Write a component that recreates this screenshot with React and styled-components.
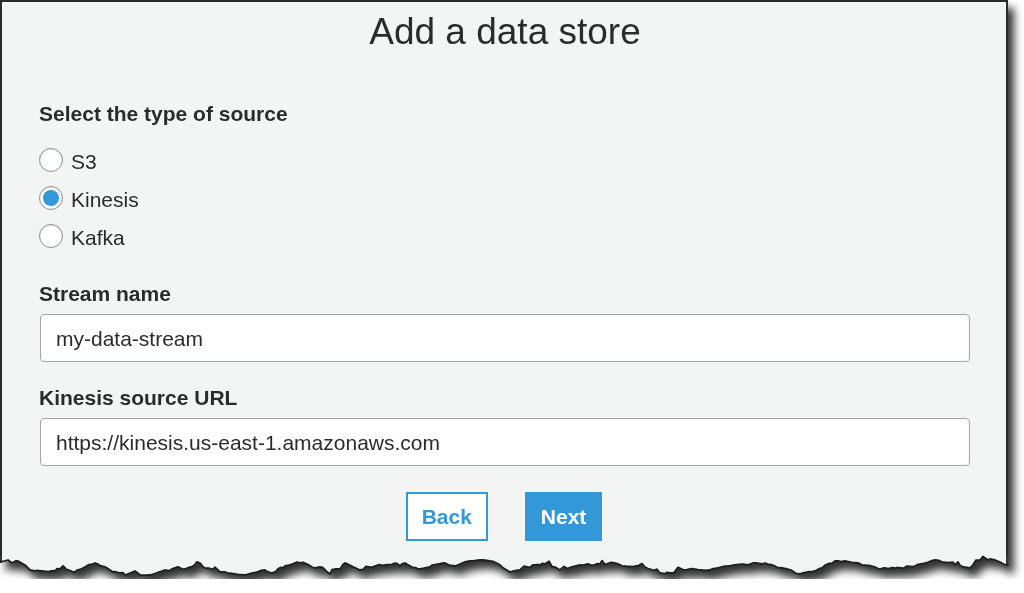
import React from "react";
import styled, { createGlobalStyle } from "styled-components";

const GlobalStyle = createGlobalStyle`
  html, body {
    margin: 0;
    background: #ffffff;
    overflow: hidden;
  }
  body {
    font-family: "Liberation Sans", Arial, Helvetica, sans-serif;
    color: #2d2d2d;
  }
`;

// seeded random so the torn edge is the same every render
const seeded = (seed) => () => {
  seed |= 0;
  seed = (seed + 0x6d2b79f5) | 0;
  let t = Math.imul(seed ^ (seed >>> 15), 1 | seed);
  t = (t + Math.imul(t ^ (t >>> 7), 61 | t)) ^ t;
  return ((t ^ (t >>> 14)) >>> 0) / 4294967296;
};

// rough outline of the tear, [x, y] with y measured from the panel bottom
const TEAR = [
  [0, 7], [8, 5], [12, 8], [18, 6], [25, 10], [30, 15], [35, 16], [55, 16],
  [60, 14], [63, 11], [66, 14], [75, 17], [85, 12], [95, 8], [107, 13],
  [113, 17], [125, 20], [135, 16], [140, 20], [150, 20], [165, 15], [185, 14],
  [200, 8], [205, 13], [220, 17], [245, 20], [258, 17], [265, 15], [272, 18],
  [285, 11], [297, 7], [312, 12], [320, 12], [330, 19], [340, 14], [345, 8],
  [360, 15], [375, 11], [395, 8], [400, 11], [405, 8], [418, 14], [445, 8],
  [455, 11], [470, 6], [480, 5], [490, 6], [500, 10], [510, 17], [520, 15],
  [535, 10], [545, 9], [560, 15], [580, 10], [600, 9], [615, 8], [625, 11],
  [645, 12], [660, 18], [670, 18], [690, 14], [710, 15], [728, 11], [765, 8],
  [782, 13], [800, 19], [815, 16], [835, 6], [845, 6], [875, 12], [880, 14],
  [900, 13], [915, 11], [935, 5], [955, 10], [970, 13], [980, 5], [990, 4],
  [1000, 7], [1008, 10],
];

const makeEdge = () => {
  const r = seeded(11);
  const pts = [];
  for (let i = 0; i < TEAR.length - 1; i++) {
    const [x0, y0] = TEAR[i];
    const [x1, y1] = TEAR[i + 1];
    pts.push([x0, y0]);
    let x = x0 + 2 + Math.round(r() * 3);
    while (x < x1 - 1) {
      const t = (x - x0) / (x1 - x0);
      let y = y0 + (y1 - y0) * t + (r() - 0.5) * 2;
      if (r() > 0.85) y -= 1.5 + r() * 2;
      pts.push([x, +y.toFixed(1)]);
      x += 2 + Math.round(r() * 4);
    }
  }
  pts.push(TEAR[TEAR.length - 1]);
  return pts;
};
const EDGE = makeEdge();
const EDGE_W = 1008;
const edgeLine = EDGE.map(([x, y]) => `${x},${y}`).join(" L");

const SOURCES = ["S3", "Kinesis", "Kafka"];

const App = () => {
  const selected = "Kinesis";

  return (
    <>
      <GlobalStyle />
      <Sheet>
        <Panel>
          <Title>Add a data store</Title>

          <SectionLabel top={48}>Select the type of source</SectionLabel>
          <RadioList>
            {SOURCES.map((s) => (
              <RadioRow key={s}>
                <RadioDot checked={s === selected} />
                <RadioText>{s}</RadioText>
              </RadioRow>
            ))}
          </RadioList>

          <SectionLabel top={27}>Stream name</SectionLabel>
          <TextBox>my-data-stream</TextBox>

          <SectionLabel top={24}>Kinesis source URL</SectionLabel>
          <TextBox>https://kinesis.us-east-1.amazonaws.com</TextBox>

          <Actions>
            <Button>Back</Button>
            <Button primary>Next</Button>
          </Actions>
        </Panel>

        {/* torn paper bottom */}
        <TornEdge viewBox={`0 0 ${EDGE_W} 24`} width={EDGE_W} height="24">
          <path d={`M0,0 L${edgeLine} L${EDGE_W},0 Z`} fill="#f3f5f5" />
          <path
            d={`M1,0 L1,${EDGE[0][1]} L${edgeLine} L1007,${TEAR[TEAR.length - 1][1]} L1007,0`}
            fill="none"
            stroke="#1f1f1f"
            strokeWidth="1.8"
            strokeLinejoin="round"
          />
        </TornEdge>
      </Sheet>
    </>
  );
};

// styled components

const Sheet = styled.div`
  width: 1008px;
  display: flex;
  flex-direction: column;
  filter: drop-shadow(6px 8px 4px rgba(0, 0, 0, 0.8));
`;

const Panel = styled.div`
  box-sizing: border-box;
  width: 1008px;
  background: #f3f5f5;
  border: 2px solid #2a2a2a;
  border-bottom: none;
  padding: 8px 36px 14px 38px;
  display: flex;
  flex-direction: column;
`;

const Title = styled.h1`
  margin: 0;
  text-align: center;
  font-size: 37px;
  line-height: 44px;
  font-weight: 400;
  color: #2b2b2b;
`;

const SectionLabel = styled.div`
  margin-top: ${(p) => p.top}px;
  margin-left: -1px;
  font-size: 21px;
  line-height: 24px;
  font-weight: 700;
  color: #2b2b2b;
`;

const RadioList = styled.div`
  margin-top: 15px;
  display: flex;
  flex-direction: column;
`;

const RadioRow = styled.div`
  height: 38px;
  display: flex;
  align-items: center;
  gap: 8px;
  margin-left: -1px;
`;

const RadioDot = styled.span`
  box-sizing: border-box;
  width: 24px;
  height: 24px;
  border-radius: 50%;
  border: 1px solid #8f8f8f;
  background: #fff;
  box-shadow: inset 0 1px 2px rgba(0, 0, 0, 0.12);
  position: relative;
  &::after {
    content: "";
    display: ${(p) => (p.checked ? "block" : "none")};
    position: absolute;
    left: 3px;
    top: 3px;
    width: 16px;
    height: 16px;
    border-radius: 50%;
    background: #3398d8;
  }
`;

const RadioText = styled.span`
  font-size: 21px;
  line-height: 24px;
  padding-top: 3px;
  color: #2b2b2b;
`;

const TextBox = styled.div`
  box-sizing: border-box;
  margin-top: 8px;
  height: 48px;
  width: 930px;
  background: #fff;
  border: 1px solid #a6a6a6;
  border-radius: 4px;
  padding: 2px 15px 0;
  display: flex;
  align-items: center;
  font-size: 21px;
  line-height: 24px;
  color: #2b2b2b;
`;

const Actions = styled.div`
  margin-top: 26px;
  display: flex;
  justify-content: center;
  gap: 37px;
  padding-right: 2px;
`;

const Button = styled.button`
  box-sizing: border-box;
  height: 49px;
  padding: 0 14px;
  border: 2px solid #3398d8;
  background: ${(p) => (p.primary ? "#3398d8" : "#ffffff")};
  color: ${(p) => (p.primary ? "#ffffff" : "#3398d8")};
  font-family: "Liberation Sans", Arial, sans-serif;
  font-size: 21px;
  font-weight: 700;
  cursor: pointer;
`;

const TornEdge = styled.svg`
  display: block;
  overflow: visible;
`;

export default App;
